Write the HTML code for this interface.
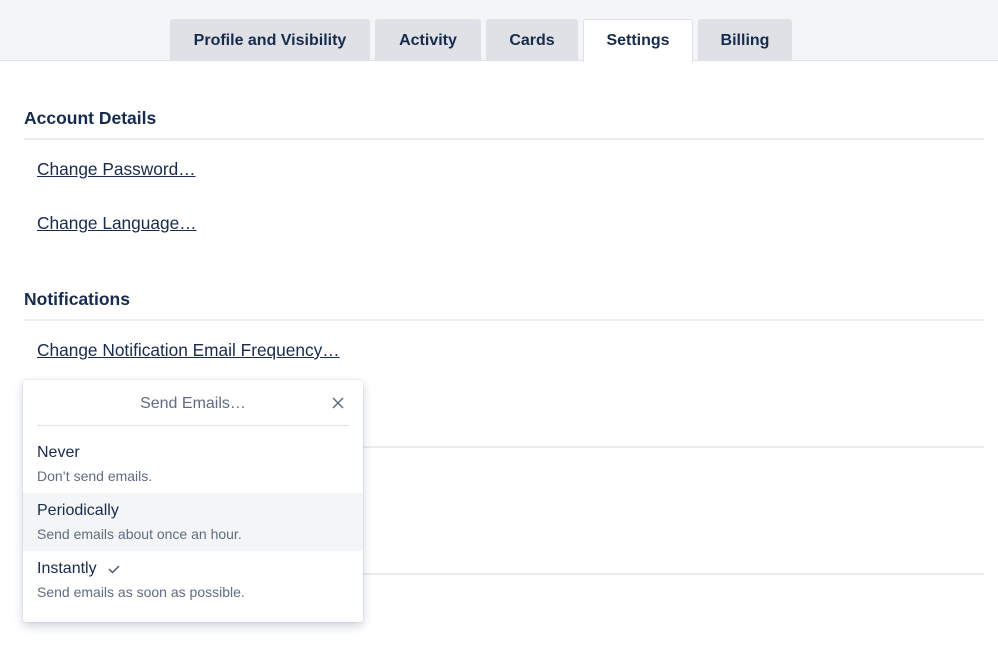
<!DOCTYPE html>
<html><head><style>
*{margin:0;padding:0;box-sizing:border-box}
body{width:998px;height:650px;background:#fff;font-family:"Liberation Sans",sans-serif;color:#172b4d;position:relative;overflow:hidden}
.hdr{position:absolute;left:0;top:0;width:998px;height:61px;background:#f4f5f7;border-bottom:1px solid #dfe1e6}
.tab{position:absolute;top:19px;height:42px;background:#dfe1e6;border-radius:3px 3px 0 0;font-weight:bold;font-size:16px;line-height:43px;text-align:center;color:#172b4d}
.tab.act{background:#fff;border:1px solid #dfe1e6;border-bottom:none;height:43px;line-height:41px}
h3{position:absolute;left:24px;font-size:17.5px;font-weight:bold}
.line{position:absolute;left:24px;width:960px;height:2px;background:#ebecf0}
a{position:absolute;left:37px;font-size:17.3px;color:#172b4d;text-decoration:underline}
.pop{position:absolute;left:23px;top:380px;width:340px;height:242px;background:#fff;border-radius:3px;box-shadow:0 4px 10px rgba(9,30,66,.2),0 0 1px rgba(9,30,66,.3)}
.pt{position:absolute;left:0;width:340px;top:15px;text-align:center;color:#5e6c84;font-size:16px}
.sep{position:absolute;left:14px;width:312px;top:45px;height:1px;background:#dfe1e6}
.it{position:absolute;left:0;width:340px;height:58px}
.it b{position:absolute;left:14px;top:9px;font-weight:normal;font-size:16px;color:#172b4d}
.it i{position:absolute;left:14px;top:33px;font-style:normal;font-size:14px;color:#5e6c84}
</style></head><body>
<div class="hdr"></div>
<div class="tab" style="left:170px;width:200px">Profile and Visibility</div>
<div class="tab" style="left:375px;width:106px">Activity</div>
<div class="tab" style="left:486px;width:92px">Cards</div>
<div class="tab act" style="left:583px;width:110px">Settings</div>
<div class="tab" style="left:698px;width:94px">Billing</div>

<h3 style="top:108px">Account Details</h3>
<div class="line" style="top:138px"></div>
<a style="top:159px">Change Password…</a>
<a style="top:213px">Change Language…</a>
<h3 style="top:289px">Notifications</h3>
<div class="line" style="top:319px"></div>
<a style="top:340px">Change Notification Email Frequency…</a>
<div class="line" style="top:446px"></div>
<div class="line" style="top:573px"></div>

<div class="pop">
<div class="pt">Send Emails…</div>
<svg style="position:absolute;left:309px;top:17px" width="12" height="12" viewBox="0 0 12 12"><path d="M1 1L11 11M11 1L1 11" stroke="#5e6c84" stroke-width="1.5"/></svg>
<div class="sep"></div>
<div class="it" style="top:55px"><b>Never</b><i>Don’t send emails.</i></div>
<div class="it" style="top:113px;background:#f4f5f7"><b>Periodically</b><i>Send emails about once an hour.</i></div>
<div class="it" style="top:171px"><b>Instantly</b><i>Send emails as soon as possible.</i>
<svg style="position:absolute;left:85px;top:13px" width="12" height="10" viewBox="0 0 12 10"><path d="M1 5L4.5 8.5L11 2" stroke="#42526e" stroke-width="1.4" fill="none"/></svg></div>
</div>
</body></html>
